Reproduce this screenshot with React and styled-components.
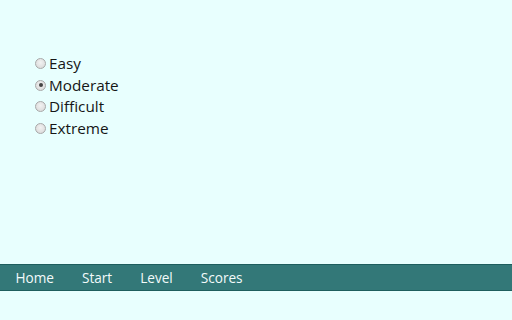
import React, { useState } from 'react';
import styled, { createGlobalStyle } from 'styled-components';

const GlobalStyle = createGlobalStyle`
  html, body {
    margin: 0;
    padding: 0;
    background: #e8fffe;
  }
  body {
    font-family: "Open Sans", "Noto Sans", sans-serif;
  }
`;

const Page = styled.div`
  width: 512px;
  height: 320px;
  display: flex;
  flex-direction: column;
  background: #e8fffe;
`;

const Main = styled.main`
  height: 264px;
  box-sizing: border-box;
  padding: 52px 0 0 34px;
`;

const LevelList = styled.div`
  display: flex;
  flex-direction: column;
`;

const Option = styled.label`
  display: flex;
  align-items: center;
  height: 21.7px;
  font-size: 15.3px;
  color: #161616;
  cursor: pointer;
`;

const Radio = styled.input.attrs({ type: 'radio' })`
  appearance: none;
  width: 11px;
  height: 11px;
  margin: 1px 3px 0 1px;
  border-radius: 50%;
  border: 1px solid #a8a8a8;
  background: radial-gradient(circle at 50% 40%, #f2f2f2 0%, #d6d6d6 100%);
  box-sizing: border-box;
  position: relative;
  &:checked::after {
    content: '';
    position: absolute;
    left: 2.5px;
    top: 2.5px;
    width: 4px;
    height: 4px;
    border-radius: 50%;
    background: #444;
  }
`;

const NavBar = styled.nav`
  height: 27px;
  box-sizing: border-box;
  display: flex;
  align-items: center;
  padding-left: 1.5px;
  background: #337878;
  border-top: 1px solid #1e5e5e;
  border-bottom: 1px solid #1e5e5e;
`;

const NavLink = styled.a`
  padding: 0 14px;
  font-size: 13.6px;
  color: #f2fafa;
  text-decoration: none;
  line-height: 25px;
`;

const levels = ['Easy', 'Moderate', 'Difficult', 'Extreme'];
const links = ['Home', 'Start', 'Level', 'Scores'];

export default function App() {
  const [level, setLevel] = useState('Moderate');

  return (
    <Page>
      <GlobalStyle />
      <Main>
        <LevelList>
          {levels.map((l) => (
            <Option key={l}>
              <Radio name="level" checked={level === l} onChange={() => setLevel(l)} />
              {l}
            </Option>
          ))}
        </LevelList>
      </Main>
      <NavBar>
        {links.map((l) => (
          <NavLink key={l} href="#">{l}</NavLink>
        ))}
      </NavBar>
    </Page>
  );
}
